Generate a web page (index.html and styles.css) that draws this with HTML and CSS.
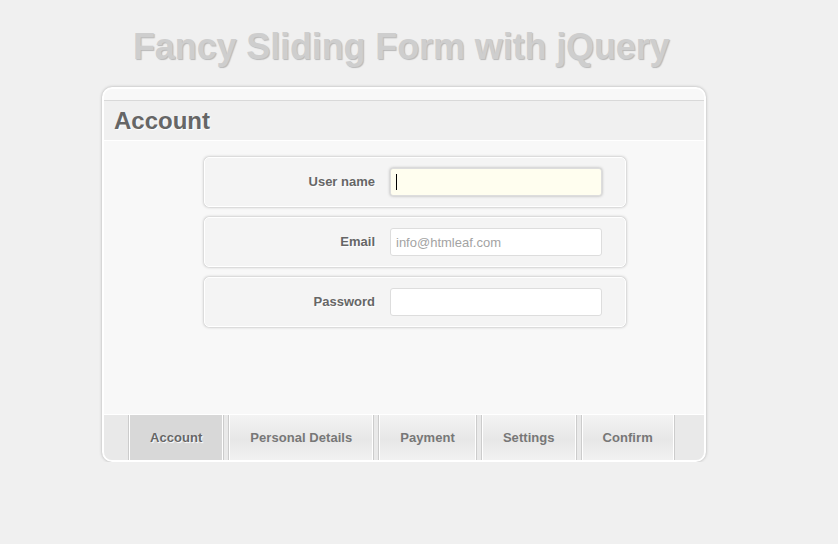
FILE: index.html
```html
<!DOCTYPE html>
<html lang="en">
<head>
<meta charset="utf-8">
<title>Fancy Sliding Form with jQuery</title>
<link rel="stylesheet" href="styles.css">
</head>
<body>
<h1 class="title">Fancy Sliding Form with jQuery</h1>
<div class="wrapper">
  <div class="legend">Account</div>
  <form class="steps">
    <div class="row">
      <label class="label" for="username">User name</label>
      <span class="field">
        <input class="input input-focus" id="username" name="username" type="text">
        <span class="caret"></span>
      </span>
    </div>
    <div class="row">
      <label class="label" for="email">Email</label>
      <input class="input" id="email" name="email" type="email" placeholder="info@htmleaf.com">
    </div>
    <div class="row">
      <label class="label" for="password">Password</label>
      <input class="input" id="password" name="password" type="password">
    </div>
  </form>
  <nav class="navigation">
    <ul class="tabs">
      <li class="tab selected"><a href="#">Account</a></li>
      <li class="tab"><a href="#">Personal Details</a></li>
      <li class="tab"><a href="#">Payment</a></li>
      <li class="tab"><a href="#">Settings</a></li>
      <li class="tab"><a href="#">Confirm</a></li>
    </ul>
  </nav>
</div>
</body>
</html>
```
FILE: styles.css
```css
* { box-sizing: content-box; }

body {
  margin: 0;
  background: #f0f0f0;
  font-family: "Liberation Sans", Arial, sans-serif;
  font-size: 13px;
  color: #444;
}

.title {
  margin: 0;
  padding: 26px 0 0 133px;
  font-size: 36px;
  line-height: 42px;
  font-weight: bold;
  letter-spacing: -0.12px;
  color: #cecece;
  text-shadow: 1px 1px 1px #b8b8b8;
}

.wrapper {
  margin: 19px 0 0 102px;
  width: 600px;
  border: 2px solid #fff;
  border-radius: 10px;
  box-shadow: 0 0 3px #aaa;
  background: #f8f8f8;
  overflow: hidden;
}

.legend {
  margin-top: 11px;
  padding: 5px 0 5px 10px;
  line-height: 29px;
  font-size: 24px;
  font-weight: bold;
  color: #666;
  text-shadow: 1px 1px 1px #fff;
  background: #f0f0f0;
  border-top: 1px solid #d9d9d9;
  border-bottom: 1px solid #fff;
}

.steps {
  height: 257px;
  margin: 0;
  padding-top: 16px;
  display: flex;
  flex-direction: column;
  gap: 10px;
}

.row {
  display: flex;
  align-items: center;
  width: 400px;
  margin-left: 100px;
  padding: 10px;
  background: #f4f4f4;
  border: 1px solid #fff;
  border-radius: 5px;
  box-shadow: 0 0 3px #aaa;
}

.label {
  width: 160px;
  margin-right: 15px;
  text-align: right;
  line-height: 28px;
  font-weight: bold;
  color: #666;
  text-shadow: 1px 1px 1px #fff;
}

.field {
  position: relative;
  display: block;
}

.input {
  display: block;
  width: 200px;
  height: 16px;
  margin: 0;
  padding: 5px;
  border: 1px solid #ddd;
  border-radius: 3px;
  background: #fff;
  font-family: "Liberation Sans", Arial, sans-serif;
  font-size: 13px;
  color: #444;
  outline: none;
}

.input::placeholder { color: #a3a3a3; }

.input-focus {
  background: #fffeef;
  box-shadow: 0 0 3px #aaa;
}

.caret {
  position: absolute;
  left: 6px;
  top: 6px;
  width: 1px;
  height: 16px;
  background: #000;
}

.navigation {
  height: 45px;
  background: #e9e9e9;
  border-top: 1px solid #fff;
}

.tabs {
  display: flex;
  margin: 0 0 0 22px;
  padding: 0;
  list-style: none;
}

.tab {
  margin: 0 2px;
  border-left: 1px solid #ccc;
  border-right: 1px solid #ccc;
}

.tab a {
  display: block;
  height: 45px;
  line-height: 45px;
  padding: 0 20px;
  border-left: 1px solid #fff;
  border-right: 1px solid #fff;
  color: #777;
  font-weight: bold;
  letter-spacing: 0.05px;
  text-decoration: none;
  background: linear-gradient(#f3f3f3, #e7e7e7 55%, #f1f1f1);
}

.tab.selected a {
  background: #d8d8d8;
  color: #666;
  text-shadow: 1px 1px 1px #fff;
}
```
